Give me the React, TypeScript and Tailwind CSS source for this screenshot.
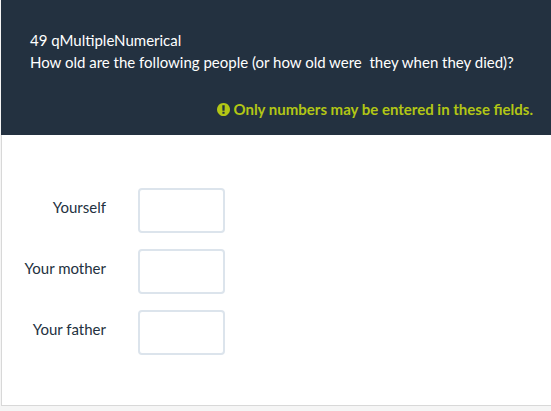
const people = [
  { id: "self", label: "Yourself" },
  { id: "mother", label: "Your mother" },
  { id: "father", label: "Your father" },
];

function AlertIcon() {
  return (
    <svg viewBox="0 0 1536 1536" className="size-[13px] shrink-0" fill="currentColor" aria-hidden="true">
      <path d="M768 0q209 0 385.500 103t279.500 279.500 103 385.500-103 385.500-279.500 279.500-385.500 103-385.500-103-279.500-279.500-103-385.500 103-385.500 279.500-279.500 385.500-103zm128 1247v-190q0-14-9-23.500t-22-9.500h-192q-13 0-23 10t-10 23v190q0 13 10 23t23 10h192q13 0 22-9.500t9-23.500zm-2-344l18-621q0-12-10-18-10-8-24-8h-220q-14 0-24 8-10 6-10 18l17 621q0 10 10 17.500t24 7.500h185q14 0 23.500-7.500t10.500-17.500z" />
    </svg>
  );
}

export default function App() {
  return (
    <div className="min-h-screen bg-[#f5f5f5] pl-px font-['Lato',sans-serif] text-[15px] leading-[22px] text-[#233140]">
      <main className="bg-white">
        <header className="bg-[#233140] pt-[29px] pr-[18px] pb-[15px] pl-[29px] text-white">
          <h1>49 qMultipleNumerical</h1>
          <p className="whitespace-pre-wrap">How old are the following people (or how old were  they when they died)?</p>
          <p className="mt-[25px] flex items-center justify-end gap-[3px] font-bold text-[#b2c615]">
            <AlertIcon />
            <span>Only numbers may be entered in these fields.</span>
          </p>
        </header>
        <form className="flex flex-col gap-4 border-b border-l border-[#d8d8d8] pt-[53px] pb-[50px]">
          {people.map((person) => (
            <div key={person.id} className="flex gap-8">
              <label htmlFor={person.id} className="w-[104px] pt-2 text-right">
                {person.label}
              </label>
              <input
                id={person.id}
                type="text"
                inputMode="numeric"
                className="h-[45px] w-[87px] rounded border-2 border-[#dce4ec] bg-white px-3 outline-none focus:border-[#233140]"
              />
            </div>
          ))}
        </form>
      </main>
    </div>
  );
}
